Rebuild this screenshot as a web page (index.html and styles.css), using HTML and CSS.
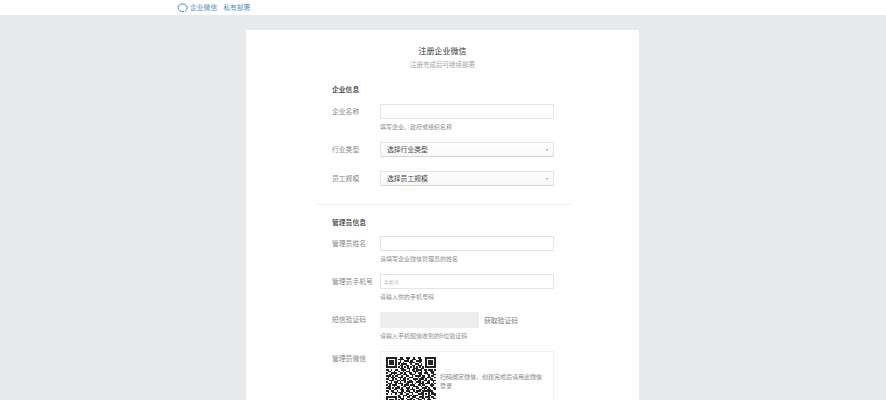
FILE: index.html
```html
<!DOCTYPE html>
<html lang="zh-CN">
<head>
<meta charset="utf-8">
<title>注册企业微信</title>
<link rel="stylesheet" href="styles.css">
</head>
<body>
<header class="topbar">
  <svg class="logo" viewBox="0 0 12 11" width="11" height="10"><path d="M9.6 8.4A5 4.3 0 1 0 7.6 9.4" fill="none" stroke="#3f8fc9" stroke-width="1.1"/><path d="M8.6 8.6l1.6 1" fill="none" stroke="#8fbf4a" stroke-width="1.1"/></svg>
  <a class="brand">企业微信</a>
  <a class="brand">私有部署</a>
</header>
<main class="card">
  <h1 class="title">注册企业微信</h1>
  <p class="subtitle">注册完成后可继续部署</p>
  <section class="section">
    <h2 class="section-title">企业信息</h2>
    <div class="row"><span class="label">企业名称</span><div class="field"><div class="input"></div><p class="hint">填写企业、政府或组织名称</p></div></div>
    <div class="row row-select"><span class="label">行业类型</span><div class="field"><div class="select"><span>选择行业类型</span><i class="caret"></i></div></div></div>
    <div class="row row-select"><span class="label">员工规模</span><div class="field"><div class="select"><span>选择员工规模</span><i class="caret"></i></div></div></div>
  </section>
  <hr class="divider">
  <section class="section">
    <h2 class="section-title">管理员信息</h2>
    <div class="row"><span class="label">管理员姓名</span><div class="field"><div class="input"></div><p class="hint">请填写企业微信管理员的姓名</p></div></div>
    <div class="row"><span class="label">管理员手机号</span><div class="field"><div class="input placeholder">手机号</div><p class="hint">请输入你的手机号码</p></div></div>
    <div class="row"><span class="label">短信验证码</span><div class="field"><div class="code-line"><div class="code-input"></div><span class="code-link">获取验证码</span></div><p class="hint">请输入手机短信收到的6位验证码</p></div></div>
    <div class="row"><span class="label">管理员微信</span><div class="field"><div class="qr-box">
      <svg class="qr" viewBox="0 0 33 33" width="50" height="50" shape-rendering="crispEdges">
        <path fill="none" stroke="#222" d="M0 .5h7M9 .5h2M13 .5h3M18 .5h1M21 .5h2M26 .5h7M0 1.500h1M6 1.500h1M8 1.500h4M14 1.500h1M17 1.500h3M22 1.500h2M26 1.500h1M32 1.500h1M0 2.500h1M2 2.500h3M6 2.500h1M9 2.500h1M12 2.500h3M16 2.500h2M20 2.500h4M26 2.500h1M28 2.500h3M32 2.500h1M0 3.500h1M2 3.500h3M6 3.500h1M8 3.500h2M11 3.500h1M15 3.500h4M22 3.500h1M26 3.500h1M28 3.500h3M32 3.500h1M0 4.500h1M2 4.500h3M6 4.500h1M8 4.500h1M10 4.500h4M16 4.500h1M19 4.500h3M23 4.500h1M26 4.500h1M28 4.500h3M32 4.500h1M0 5.500h1M6 5.500h1M9 5.500h2M13 5.500h2M17 5.500h2M21 5.500h3M26 5.500h1M32 5.500h1M0 6.500h7M8 6.500h1M10 6.500h1M12 6.500h1M14 6.500h1M16 6.500h1M18 6.500h1M20 6.500h1M22 6.500h1M24 6.500h1M26 6.500h7M9 7.500h3M14 7.500h2M18 7.500h3M23 7.500h2M0 8.500h2M3 8.500h1M6 8.500h2M10 8.500h3M15 8.500h1M17 8.500h2M20 8.500h4M25 8.500h2M28 8.500h3M32 8.500h1M1 9.500h2M5 9.500h1M8 9.500h1M11 9.500h1M13 9.500h3M18 9.500h3M23 9.500h1M26 9.500h1M29 9.500h3M0 10.500h1M3 10.500h4M9 10.500h2M12 10.500h1M15 10.500h2M19 10.500h1M21 10.500h3M25 10.500h3M30 10.500h2M2 11.500h2M5 11.500h1M7 11.500h3M11 11.500h3M16 11.500h3M22 11.500h2M27 11.500h2M31 11.500h2M0 12.500h3M4 12.500h1M6 12.500h2M10 12.500h1M13 12.500h2M17 12.500h1M19 12.500h4M24 12.500h2M28 12.500h1M30 12.500h2M1 13.500h1M3 13.500h3M8 13.500h3M12 13.500h1M15 13.500h3M21 13.500h1M23 13.500h3M27 13.500h3M32 13.500h1M0 14.500h2M4 14.500h1M6 14.500h1M9 14.500h1M11 14.500h2M14 14.500h1M18 14.500h3M22 14.500h3M26 14.500h1M29 14.500h2M2 15.500h3M7 15.500h2M10 15.500h3M15 15.500h2M19 15.500h1M21 15.500h2M25 15.500h2M28 15.500h1M30 15.500h3M0 16.500h1M3 16.500h1M5 16.500h3M9 16.500h1M12 16.500h1M14 16.500h4M20 16.500h3M24 16.500h1M27 16.500h2M31 16.500h1M1 17.500h3M6 17.500h1M8 17.500h3M13 17.500h2M17 17.500h1M19 17.500h1M22 17.500h3M26 17.500h3M30 17.500h1M32 17.500h1M0 18.500h1M2 18.500h1M4 18.500h3M10 18.500h1M12 18.500h3M16 18.500h3M21 18.500h2M24 18.500h2M29 18.500h3M1 19.500h2M5 19.500h1M7 19.500h2M11 19.500h2M15 19.500h1M18 19.500h3M23 19.500h1M26 19.500h2M30 19.500h1M0 20.500h3M4 20.500h1M6 20.500h3M10 20.500h1M13 20.500h3M17 20.500h1M20 20.500h2M24 20.500h3M28 20.500h1M31 20.500h2M2 21.500h1M5 21.500h2M9 21.500h3M14 21.500h1M16 21.500h3M22 21.500h2M25 21.500h1M27 21.500h3M32 21.500h1M0 22.500h2M3 22.500h2M7 22.500h1M10 22.500h2M13 22.500h3M18 22.500h1M20 22.500h3M24 22.500h7M1 23.500h1M4 23.500h3M8 23.500h3M12 23.500h1M15 23.500h3M19 23.500h2M23 23.500h2M28 23.500h1M30 23.500h2M0 24.500h1M3 24.500h1M6 24.500h1M9 24.500h2M13 24.500h2M17 24.500h1M21 24.500h3M24 24.500h1M26 24.500h1M28 24.500h1M30 24.500h3M8 25.500h1M11 25.500h3M15 25.500h2M18 25.500h3M24 25.500h1M28 25.500h2M32 25.500h1M0 26.500h7M8 26.500h2M11 26.500h1M14 26.500h2M17 26.500h3M22 26.500h3M26 26.500h3M30 26.500h2M0 27.500h1M6 27.500h1M9 27.500h3M13 27.500h1M16 27.500h2M20 27.500h2M24 27.500h2M28 27.500h1M31 27.500h2M0 28.500h1M2 28.500h3M6 28.500h1M8 28.500h1M10 28.500h2M14 28.500h3M18 28.500h1M21 28.500h3M25 28.500h1M27 28.500h3M0 29.500h1M2 29.500h3M6 29.500h1M9 29.500h1M12 29.500h2M15 29.500h1M17 29.500h3M23 29.500h2M26 29.500h2M30 29.500h2"/>
      </svg>
      <p class="qr-text">扫码绑定微信，创建完成后请用此微信登录</p>
    </div></div></div>
  </section>
</main>
</body>
</html>
```
FILE: styles.css
```css
html, body {
  margin: 0;
  height: 400px;
  overflow: hidden;
}
body {
  background: #e8e9eb;
  font-family: "Noto Sans CJK SC", "Noto Sans", sans-serif;
  color: #8a8a8a;
}
h1, h2, p { margin: 0; font-weight: normal; }

.topbar {
  height: 15px;
  background: #fff;
  display: flex;
  align-items: center;
  padding-left: 177px;
}
.logo { margin-right: 2px; flex: none; }
.brand {
  font-size: 6.8px;
  line-height: 15px;
  color: #5a8cc4;
  margin-right: 6px;
}

.card {
  width: 393px;
  height: 370px;
  margin: 15px 0 0 246px;
  background: #fff;
  box-sizing: border-box;
  padding-top: 15px;
}
.title {
  font-size: 8px;
  line-height: 12px;
  color: #333;
  text-align: center;
  letter-spacing: 0;
}
.subtitle {
  font-size: 6.5px;
  line-height: 10px;
  margin-top: 2px;
  color: #a4a4a4;
  text-align: center;
}
.section { padding-left: 86px; }
.section-title {
  font-size: 6.8px;
  line-height: 10px;
  font-weight: 500;
  color: #333;
  margin-top: 12px;
}
.section:first-of-type .section-title { margin-top: 15px; }

.row { display: flex; margin-top: 9px; }
.section:first-of-type .row:first-of-type { margin-top: 10px; }
.row + .row { margin-top: 0; }
.row-select { margin-bottom: 14px; }
.label {
  width: 48px;
  flex: none;
  font-size: 6.8px;
  line-height: 14px;
  white-space: nowrap;
  color: #868686;
}
.field { width: 174px; }
.input {
  height: 15px;
  box-sizing: border-box;
  border: 1px solid #e4e5e7;
  background: #fff;
}
.placeholder {
  font-size: 5px;
  line-height: 13px;
  padding-left: 3px;
  color: #b5b5b5;
}
.hint {
  font-size: 6px;
  line-height: 8px;
  padding: 4px 0 11px;
  color: #8e8e8e;
  white-space: nowrap;
}
.select {
  height: 15px;
  box-sizing: border-box;
  border: 1px solid #e4e5e7;
  border-bottom-color: #d6d7d9;
  background: linear-gradient(#fff, #f7f7f7);
  display: flex;
  align-items: center;
  justify-content: space-between;
  padding: 0 5px 0 6px;
  font-size: 6.8px;
  line-height: 13px;
  color: #444;
}
.caret {
  width: 0;
  height: 0;
  border-left: 1px solid transparent;
  border-right: 1px solid transparent;
  border-top: 2px solid #999;
}
.divider {
  border: 0;
  height: 1px;
  background: #f1f1f2;
  margin: 18px 67px 0 70px;
}
.code-line { display: flex; align-items: center; }
.code-input {
  width: 99px;
  height: 16px;
  background: #ededee;
  flex: none;
}
.code-link {
  margin-left: 5px;
  font-size: 6.8px;
  line-height: 16px;
  color: #7c7c7c;
}
.qr-box {
  height: 80px;
  box-sizing: border-box;
  border: 1px solid #f0f0f1;
  padding: 5px;
  display: flex;
  align-items: flex-start;
}
.qr { flex: none; }
.qr-text {
  font-size: 6px;
  line-height: 9px;
  margin: 15px 0 0 4px;
  width: 104px;
  color: #858585;
}
```
